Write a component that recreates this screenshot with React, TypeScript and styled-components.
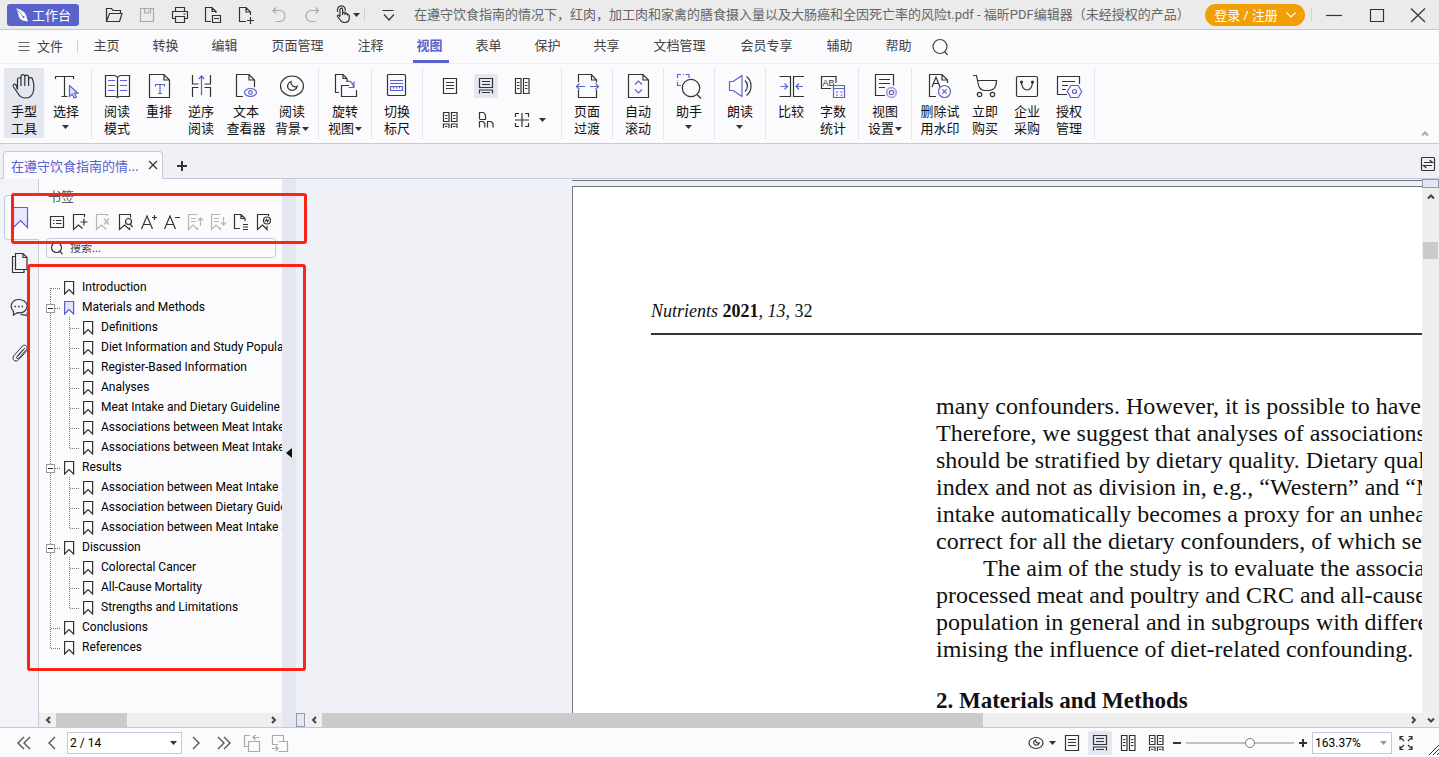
import React from "react";
import styled, { createGlobalStyle, css } from "styled-components";

const INK = "#333";
const ACCENT = "#5a63cb";
const LINE = "#c5c8d8";
const UI = `Roboto, "Noto Sans CJK SC", sans-serif`;
const LABEL = `"Noto Sans", "Noto Sans CJK SC", sans-serif`;

const GlobalStyle = createGlobalStyle`
  * { box-sizing: border-box; }
  body { margin: 0; font-family: ${LABEL}; font-size: 13px; color: #222; overflow: hidden; }
  button, input, select { font: inherit; color: inherit; }
  button { border: 0; padding: 0; background: none; white-space: nowrap; }
  svg { display: block; flex: none; }
`;

const Window = styled.div`
  display: flex;
  flex-direction: column;
  height: 100vh;
  background: #f0f1f6;
`;

/* ---------- icons ---------- */

const Ico = ({ size, children, color = INK }: { size: number; children: React.ReactNode; color?: string }) => (
  <svg width={size} height={size} viewBox={`0 0 ${size} ${size}`} fill="none" stroke={color} strokeWidth="1.2" aria-hidden="true">
    {children}
  </svg>
);

const Caret = ({ color = INK }: { color?: string }) => (
  <svg width="7" height="4" viewBox="0 0 7 4" fill={color} aria-hidden="true">
    <path d="M0 0h7L3.5 4z" />
  </svg>
);

const Chevron = ({ dir, color = "#444" }: { dir: "left" | "right" | "up" | "down"; color?: string }) => {
  const d = {
    left: "M7 2 4 5l3 3",
    right: "M3 2l3 3-3 3",
    up: "M2 6.5l3-3 3 3",
    down: "M2 3.5l3 3 3-3",
  }[dir];
  return (
    <svg width="10" height="10" viewBox="0 0 10 10" fill="none" stroke={color} strokeWidth="2" aria-hidden="true">
      <path d={d} />
    </svg>
  );
};

const P = ACCENT;

const bigIcons: Record<string, React.ReactNode> = {
  hand: (
    <path d="M7.5 17.5V7.5a1.7 1.7 0 0 1 3.5 0V14M11 8V4.5a1.9 1.9 0 0 1 3.8 0V14M14.8 5a1.9 1.9 0 0 1 3.8 0v9M18.6 7.5a1.9 1.9 0 0 1 3.900 0l1 3c.4 2 .5 4 .2 7-.5 5-3.200 8.500-7.700 8.500-4.500 0-6.500-1.500-8-4.500l-4.700-7c-.8-2.200 1.500-3.200 2.700-1.700l1.500 4.700" />
  ),
  select: (
    <>
      <path d="M3.500 7V4.500h18V7M12.500 4.500v20M9.500 24.500h6" />
      <path stroke={P} fill="#e6e6fb" d="M17.500 13.500v11l2.800-2.500 1.900 4 2.200-1-1.900-3.800h3.500z" />
    </>
  ),
  book: (
    <>
      <path d="M14.500 5.500c-1-1.300-2-2-3.500-2H2.500v21h9c1.500 0 2.300 0 3 .8.700-.8 1.500-.8 3-.8h9v-21H18c-1.500 0-2.500.7-3.500 2zv19.500" />
      <path stroke={P} d="M5 8.500h7M5 13.500h7M5 18.500h7M17 8.500h7M17 13.500h7M17 18.500h7" />
    </>
  ),
  reflow: (
    <>
      <path d="M4.500 2.500H19l5.500 5.500v17.500h-20zM19 2.500V8h5.500" />
      <path stroke={P} d="M10.500 14.500v-2h9v2M15 12.500v9M13 21.500h4" />
    </>
  ),
  reverse: (
    <>
      <path d="M5.500 3v9H11.500M5.500 25v-9.500H11.500M23.500 3v9H17.500M23.500 25v-9.500H17.500" />
      <path stroke={P} d="M14.500 4v19M11.800 7l2.700-3 2.700 3" />
    </>
  ),
  viewer: (
    <>
      <path d="M11 24.500H4.500v-22H17l5.500 5.500v7M17 2.500V8h5.500" />
      <ellipse cx="18.500" cy="20.500" rx="6" ry="4" stroke={P} />
      <circle cx="18.500" cy="20.500" r="1.800" stroke={P} />
    </>
  ),
  background: (
    <>
      <ellipse cx="14" cy="14" rx="11.500" ry="10" />
      <path d="M13 9.500c-4 1.500-4.500 6-1.500 8 3 2 7 .5 7.800-3.300-3 1.800-6.800-.7-6.300-4.700z" />
    </>
  ),
  rotate: (
    <>
      <path d="M8 20.500H4.500v-18H12l4 4V10M12 2.500V6.500h4M25.500 18v6.500h-15v-11H18" />
      <path stroke={P} d="M15.500 9.500c4-1.200 6.500 1.500 7 5.500M23 9.500v6H17.500" />
    </>
  ),
  ruler: (
    <>
      <rect x="4.500" y="2.500" width="18" height="21" rx="1" />
      <path stroke={P} d="M7 8.500h13M7 11.500h13M7.500 14.500h12v4h-12zM10.500 14.500v2M13.500 14.500v2M16.500 14.500v2" />
    </>
  ),
  transition: (
    <>
      <path d="M5.500 10V2.500h13L23.500 8v2.500M18.500 2.500V8h5M5.500 18v7.500h18V18" />
      <path stroke={P} d="M12 14.500H3.500M6.500 11.500l-3 3 3 3M17 14.500h8.500M22.500 11.500l3 3-3 3" />
    </>
  ),
  autoscroll: (
    <>
      <path d="M4.500 2.500H19l5.500 5.500v17.500h-20zM19 2.500V8h5.500" />
      <path stroke={P} d="M11 12.500l3.500-3.500 3.500 3.500M11 17.500l3.500 3.500 3.500-3.500" />
    </>
  ),
  assistant: (
    <>
      <path stroke={P} d="M2.500 6V2.500H6M10.500 2.500H14V6M2.500 10v3.500H6M8 2.500h1M2.500 8v.5" />
      <circle cx="16" cy="16" r="8.700" />
      <path d="M22 22.500l4 4" />
    </>
  ),
  speak: (
    <>
      <path stroke={P} d="M3.500 9.500h3.500L16 3.500v21L7 18.500H3.500z" strokeLinejoin="round" />
      <path d="M19 8.500c3.300 3 3.300 8 0 11M20.500 4.500c6 4.500 6 14.500 0 19" />
    </>
  ),
  compare: (
    <>
      <path d="M2.500 4.500h11v20h-11M27 4.500H16.500v20H27" />
      <path stroke={P} d="M3.500 14.500h7M7.500 11.500l3 3-3 3M26 14.500h-7M22 11.500l-3 3 3 3" />
    </>
  ),
  count: (
    <>
      <path d="M12 16.500H2.500v-12h14.500V11" />
      <text x="3.500" y="14" fontSize="9" fill={INK} stroke="none" fontFamily="Liberation Sans, sans-serif">AB</text>
      <path stroke={P} d="M14.500 13.500h11v12h-11zM14.500 16.500h11" />
      <path stroke="#b99be0" strokeWidth="2" d="M17 20h2M21.500 20h2M17 23.300h2M21.500 23.300h2" />
    </>
  ),
  settings: (
    <>
      <path d="M14 23.500H4.500v-21h18v11M8 7.500h11M8 11.500h11M8 15.500h6" />
      <circle cx="20.500" cy="20.500" r="4.800" stroke="#b99be0" strokeWidth="1.800" />
      <circle cx="20.500" cy="20.500" r="2.200" stroke={P} />
    </>
  ),
  watermark: (
    <>
      <path d="M10 24.500H3.500v-22H16l5.500 5.500v3M16 2.500V8h5.500M6 15l4-10 4 10M7.500 11.500h5" />
      <circle cx="18.500" cy="19.500" r="6" stroke={P} />
      <path stroke={P} d="M16.300 17.300l4.400 4.400M20.700 17.300l-4.400 4.400" />
    </>
  ),
  cart: (
    <>
      <path d="M2 3.500h3.500L6.500 8.500H25.500c0 6-2 10-8 10h-4C8.500 18.500 7.500 14 6.500 8.500" />
      <circle cx="8.500" cy="22.500" r="2.200" />
      <circle cx="21.500" cy="22.500" r="2.200" />
    </>
  ),
  bag: (
    <>
      <rect x="3.500" y="4.500" width="21" height="20" rx="1.500" />
      <path d="M8.500 10c0 5 2.500 8 5.500 8s5.500-3 5.500-8" />
      <circle cx="8.500" cy="10" r="1" fill={INK} />
      <circle cx="19.500" cy="10" r="1" fill={INK} />
    </>
  ),
  license: (
    <>
      <path d="M12 22.500H2.500v-18h22V12M7 9.500h13M7 13.500h6M7 17.500h4" />
      <path stroke={P} fill="#fbfbfe" d="M15.800 13.500h7.400l3.500 6-3.500 6h-7.400l-3.500-6z" />
      <circle cx="19.500" cy="19.500" r="2" stroke={P} />
    </>
  ),
};

const pageIcons: Record<string, React.ReactNode> = {
  single: <path d="M3.500 2.500h13v15h-13zM6 6.500h8M6 9.500h8M6 12.500h8" />,
  continuous: <path d="M3.500 2.500h13v9h-13zM6 5.500h8M6 8.500h8M3.500 17.500v-3.500h13v3.500M6 16.500h8" />,
  facing: <path d="M3.500 2.500h5.500v15H3.500zM11.500 2.500h5.500v15h-5.500zM5 6.500h2.500M5 9.500h2.500M5 12.500h2.500M13 6.500h2.500M13 9.500h2.500M13 12.500h2.500" />,
  facingCont: (
    <path d="M3.500 2.500h5.500v9H3.500zM11.500 2.500h5.500v9h-5.500zM5 5.500h2.500M5 8.500h2.500M13 5.500h2.500M13 8.500h2.500M3.500 18v-4h5.500v4M11.500 18v-4h5.500v4M5 16.500h2.500M13 16.500h2.500" />
  ),
  cover: <path d="M3.500 9V2.500h4l2 2.500v4.500h-6M3.500 17.500v-6h3.500l1.800 2v4M11.500 17.500v-6h3.500l2 2v4" />,
  split: <path d="M10 3v14M3 10h14M3.500 7V3.500H7M13 3.500h3.500V7M3.500 13v3.500H7M13 16.500h3.500V13" />,
};

/* ---------- title bar ---------- */

const TitleBar = styled.header`
  display: flex;
  align-items: center;
  flex: none;
  height: 30px;
  padding-left: 7px;
  background: #ebebeb;
  border-bottom: 1px solid ${LINE};
`;

const Workbench = styled.button`
  display: flex;
  align-items: center;
  justify-content: center;
  gap: 3px;
  width: 72px;
  height: 22px;
  margin-right: 18px;
  border-radius: 3px;
  background: ${ACCENT};
  color: #fff;
`;

const TitleTool = styled.button<{ $w?: number }>`
  display: flex;
  align-items: center;
  justify-content: center;
  flex: none;
  width: ${(p) => p.$w ?? 33}px;
  height: 29px;
`;

const Divider = styled.span<{ $h: number }>`
  flex: none;
  width: 1px;
  height: ${(p) => p.$h}px;
  background: #cfcfd4;
`;

const DocTitle = styled.h1`
  flex: 1;
  min-width: 0;
  margin: 0 0 0 10px;
  overflow: hidden;
  font-family: ${UI};
  font-size: 13px;
  font-weight: 400;
  line-height: 20px;
  color: #666;
  white-space: nowrap;
`;

const Login = styled.button`
  display: flex;
  align-items: center;
  justify-content: center;
  gap: 8px;
  width: 100px;
  height: 22px;
  margin-right: 6px;
  border-radius: 11px;
  background: #f29f05;
  color: #fff;
`;

/* ---------- menu ---------- */

const MenuBar = styled.nav`
  display: flex;
  align-items: center;
  flex: none;
  height: 34px;
  background: #fbfbfe;
  border-bottom: 1px solid #ededf2;
`;

const FileMenu = styled.button`
  display: flex;
  align-items: center;
  justify-content: center;
  gap: 7px;
  width: 77px;
  padding: 0 0 2px 4px;
  color: #444;
`;

const MenuTab = styled.button<{ $wide: boolean; $active: boolean }>`
  width: ${(p) => (p.$wide ? 87 : 59)}px;
  height: 33px;
  padding: 0 2px 4px 0;
  color: #444;
  background: linear-gradient(${ACCENT}, ${ACCENT}) bottom center / 0 3px no-repeat;
  ${(p) =>
    p.$active &&
    css`
      color: ${ACCENT};
      font-weight: 700;
      background-size: 36px 3px;
    `}
`;

const SearchButton = styled.button`
  display: flex;
  justify-content: center;
  width: 22px;
`;

/* ---------- ribbon ---------- */

const Ribbon = styled.div`
  display: flex;
  align-items: flex-start;
  flex: none;
  height: 80px;
  padding-top: 4px;
  background: #fbfbfe;
  border-bottom: 1px solid ${LINE};
`;

const RibbonGroup = styled.div`
  display: flex;
  gap: 2px;
  flex: none;
  height: 71px;
  padding: 0 5px;
  border-right: 1px solid #e4e5ee;
  &:first-child {
    padding-left: 4px;
  }
`;

const RibbonButton = styled.button<{ $w?: number; $active?: boolean }>`
  display: flex;
  flex-direction: column;
  align-items: center;
  flex: none;
  width: ${(p) => p.$w ?? 40}px;
  height: 70px;
  padding-top: 4px;
  border-radius: 2px;
  line-height: 17px;
  color: #111;
  background: ${(p) => (p.$active ? "#e4e7f0" : "transparent")};
`;

const RibbonLabel = styled.span`
  display: flex;
  flex-direction: column;
  align-items: center;
  margin-top: 3px;
`;

const LabelLine = styled.span<{ $caretOnly?: boolean }>`
  display: flex;
  align-items: center;
  justify-content: center;
  gap: 1px;
  height: 17px;
  padding-bottom: ${(p) => (p.$caretOnly ? 4 : 0)}px;
`;

const LayoutGrid = styled.div`
  display: grid;
  grid-template-columns: 36px 36px 29px 7px;
  grid-template-rows: 24px 24px;
  row-gap: 10px;
  align-content: start;
  align-items: center;
  padding: 6px 10px 0 10px;
`;

const PageMode = styled.button<{ $active?: boolean }>`
  display: flex;
  align-items: center;
  justify-content: center;
  flex: none;
  width: 24px;
  height: 24px;
  border-radius: 2px;
  background: ${(p) => (p.$active ? "#e4e7f0" : "transparent")};
`;

const CollapseButton = styled.button`
  align-self: flex-end;
  margin: 0 9px 4px auto;
`;

/* ---------- document tabs ---------- */

const TabBar = styled.div`
  display: flex;
  align-items: flex-end;
  flex: none;
  height: 35px;
  padding-left: 3px;
  background: #f0f1f6;
  border-bottom: 1px solid ${LINE};
`;

const DocTab = styled.div`
  display: flex;
  align-items: center;
  justify-content: space-between;
  width: 160px;
  height: 28px;
  margin-bottom: -1px;
  padding: 0 4px 0 7px;
  border: 1px solid ${LINE};
  border-bottom-color: #fbfbfe;
  border-radius: 4px 4px 0 0;
  background: #fbfbfe;
  color: ${ACCENT};
  white-space: nowrap;
`;

const TabIcon = styled.button<{ $end?: boolean }>`
  margin: ${(p) => (p.$end ? "0 3px 6px auto" : "0 0 6px 13px")};
`;

/* ---------- workspace ---------- */

const Workspace = styled.main`
  position: relative;
  display: flex;
  flex: 1;
  min-height: 0;
`;

const SideRail = styled.nav`
  display: flex;
  flex-direction: column;
  align-items: flex-end;
  flex: none;
  width: 39px;
  padding-top: 16px;
  background: #f3f4f9;
  border-right: 1px solid ${LINE};
`;

const RailButton = styled.button<{ $active?: boolean }>`
  display: flex;
  align-items: center;
  width: 34px;
  height: 45px;
  padding-left: 6px;
  ${(p) =>
    p.$active &&
    css`
      margin-right: -1px;
      width: 35px;
      padding-left: 7px;
      border: 1px solid ${LINE};
      border-right: 0;
      border-radius: 4px 0 0 4px;
      background: #fbfbfe;
    `}
`;

const BookmarkPanel = styled.section`
  display: flex;
  flex-direction: column;
  flex: none;
  width: 243px;
  background: #fbfbfe;
`;

const PanelTitle = styled.h2`
  margin: 0;
  padding: 7px 0 0 9px;
  font-size: 13px;
  font-weight: 400;
  line-height: 20px;
  color: #555;
`;

const PanelTools = styled.div`
  display: flex;
  padding: 4px 0 0 6px;
`;

const PanelTool = styled.button`
  display: flex;
  justify-content: center;
  flex: none;
  width: 23px;
  height: 24px;
  align-items: center;
`;

const PanelSearch = styled.label`
  display: flex;
  align-items: center;
  gap: 6px;
  height: 20px;
  margin: 4px 6px 0 7px;
  padding: 0 3px;
  border: 1px solid ${LINE};
  border-radius: 3px;
`;

const PanelInput = styled.input`
  min-width: 0;
  flex: 1;
  padding: 0;
  border: 0;
  outline: 0;
  background: none;
  font-size: 11px;
  line-height: 16px;
  &::placeholder {
    color: #444;
  }
`;

const Tree = styled.ul`
  flex: 1;
  min-height: 0;
  margin: 0;
  padding: 19px 0 0 6px;
  overflow: hidden;
  list-style: none;
`;

const TreeRow = styled.li`
  display: flex;
  height: 20px;
`;

const TreeLink = styled.a`
  display: flex;
  align-items: center;
  gap: 7px;
  color: #000;
  font-family: ${UI};
  font-size: 12px;
  line-height: 20px;
  white-space: nowrap;
  text-decoration: none;
`;

const Splitter = styled.button`
  display: flex;
  align-items: center;
  justify-content: center;
  flex: none;
  width: 14px;
  background: #e4e7f0;
`;

const HScroll = styled.div`
  display: flex;
  align-items: center;
  flex: none;
  height: 14px;
  background: #efefef;
`;

const HTrack = styled.div`
  display: flex;
  flex: 1;
  align-self: stretch;
`;

const Thumb = styled.div<{ $size: string }>`
  width: ${(p) => p.$size};
  background: #cbcbcb;
`;

const ScrollArrow = styled.button<{ $vertical?: boolean }>`
  display: flex;
  align-items: center;
  justify-content: center;
  flex: none;
  width: 17px;
  height: ${(p) => (p.$vertical ? 17 : 14)}px;
`;

const SplitHandle = styled.span<{ $vertical?: boolean }>`
  flex: none;
  width: ${(p) => (p.$vertical ? 17 : 9)}px;
  height: ${(p) => (p.$vertical ? 9 : 14)}px;
  border: 1px solid #9297b3;
  background: #e4e7f0;
`;

const DocumentPane = styled.section`
  display: flex;
  flex-direction: column;
  flex: 1;
  min-width: 0;
`;

const Canvas = styled.div`
  display: flex;
  flex-direction: column;
  flex: 1;
  gap: 5px;
  min-height: 0;
  padding-left: 276px;
  overflow: hidden;
  background: #f0f1f6;
`;

const PreviousPage = styled.div`
  flex: none;
  height: 2px;
  border-bottom: 1px solid #74767e;
`;

const Sheet = styled.article`
  flex: 1;
  padding: 112px 0 0 78px;
  border: solid #74767e;
  border-width: 1px 0 0 1px;
  background: #fff;
  color: #111;
  font-family: "Liberation Serif", serif;
  font-size: 24px;
  line-height: 27px;
  white-space: nowrap;
`;

const RunningHead = styled.p`
  margin: 0;
  padding-bottom: 9px;
  border-bottom: 2px solid #333;
  font-size: 18px;
  line-height: 25px;
`;

const Prose = styled.div`
  margin: 58px 0 0 285px;
`;

const Paragraph = styled.p<{ $indent?: boolean }>`
  margin: 0;
  text-indent: ${(p) => (p.$indent ? 47 : 0)}px;
`;

const SectionTitle = styled.h3`
  margin: 24px 0 0;
  font-size: 23px;
  line-height: 27px;
`;

const VScroll = styled.div`
  display: flex;
  flex-direction: column;
  flex: none;
  width: 17px;
  background: #efefef;
`;

const VThumb = styled.div`
  height: 17px;
  margin: 37px 1px auto;
  background: #cbcbcb;
`;

const Highlight = styled.div<{ $x: number; $y: number; $w: number; $h: number }>`
  position: absolute;
  left: ${(p) => p.$x}px;
  top: ${(p) => p.$y}px;
  width: ${(p) => p.$w}px;
  height: ${(p) => p.$h}px;
  border: 3px solid #fc2419;
  border-radius: 3px;
  pointer-events: none;
`;

/* ---------- status bar ---------- */

const StatusBar = styled.footer`
  display: flex;
  align-items: center;
  flex: none;
  height: 30px;
  padding-left: 11px;
  border-top: 1px solid ${LINE};
  background: #fbfbfe;
`;

const StatusButton = styled.button<{ $narrow?: boolean }>`
  display: flex;
  align-items: center;
  justify-content: center;
  flex: none;
  width: ${(p) => (p.$narrow ? 16 : 28)}px;
  height: 24px;
`;

const Combo = styled.label<{ $w: number }>`
  display: grid;
  grid-template-columns: 1fr 15px;
  align-items: center;
  flex: none;
  width: ${(p) => p.$w}px;
  height: 22px;
  border: 1px solid ${LINE};
  background: #fff;
`;

const ComboSelect = styled.select`
  grid-area: 1 / 1 / 2 / 3;
  height: 20px;
  padding: 0 2px;
  border: 0;
  outline: 0;
  appearance: none;
  background: none;
  color: #000;
  font-family: ${UI};
  font-size: 12px;
`;

const ComboCaret = styled.span`
  grid-area: 1 / 2;
  justify-self: center;
  pointer-events: none;
`;

const RightTools = styled.div`
  display: flex;
  align-items: center;
  margin-left: auto;
`;

const ModeRow = styled.div`
  display: flex;
  gap: 4px;
`;

const ZoomStep = styled.button`
  display: flex;
  align-items: center;
  justify-content: center;
  width: 18px;
  height: 20px;
`;

const ZoomSlider = styled.input`
  width: 108px;
  height: 16px;
  margin: 0;
  appearance: none;
  background: none;
  &::-webkit-slider-runnable-track {
    height: 2px;
    background: #c2c2c2;
  }
  &::-webkit-slider-thumb {
    appearance: none;
    width: 10px;
    height: 10px;
    margin-top: -4px;
    border: 1px solid #777;
    border-radius: 50%;
    background: #fff;
  }
`;

const Grip = styled.svg`
  align-self: flex-end;
  width: 14px;
  height: 14px;
  margin: 8px 0 0 5px;
`;

/* ---------- content ---------- */

const titleTools: { name: string; faded?: boolean; art: React.ReactNode }[] = [
  { name: "打开", art: <path d="M2.500 16.500v-13h5l1.500 2h7.500v3M2.500 16.500l3-8H18l-2.500 8z" /> },
  { name: "保存", faded: true, art: <path d="M3.500 3.500h13v13h-13zM7.500 3.500v4.500h6V3.500M11.500 5v1.500" /> },
  { name: "打印", art: <path d="M5.500 6.500v-4h9v4M5.500 13.500h-3v-7h15v7h-3M5.500 11.500h9v6h-9zM13.500 9h2" /> },
  { name: "另存为", art: <path d="M8 16.500H2.500v-14H9l4 4V8M9 2.500v4h4M9.500 10.500h8v7h-8zM11 13.500h5" /> },
  { name: "新建", art: <path d="M10 16.500H3.500v-14H10l4.500 4.500v3M10 2.500V7h4.500M14.500 12v7M11 15.500h7" /> },
  { name: "撤销", faded: true, art: <path d="M4 5.500h7a5 5.500 0 0 1 0 11H6.500M7 2.500l-3 3 3 3" /> },
  { name: "重做", faded: true, art: <path d="M16.500 5.500H9a5 5.500 0 0 0 0 11h4.500M13.500 2.500l3 3-3 3" /> },
];

const tabs = ["主页", "转换", "编辑", "页面管理", "注释", "视图", "表单", "保护", "共享", "文档管理", "会员专享", "辅助", "帮助"];

type Tool = { icon: string; lines: string[]; w?: number; caret?: boolean; active?: boolean };

const groupsBefore: Tool[][] = [
  [
    { icon: "hand", lines: ["手型", "工具"], active: true },
    { icon: "select", lines: ["选择"], caret: true },
  ],
  [
    { icon: "book", lines: ["阅读", "模式"] },
    { icon: "reflow", lines: ["重排"] },
    { icon: "reverse", lines: ["逆序", "阅读"] },
    { icon: "viewer", lines: ["文本", "查看器"], w: 46 },
    { icon: "background", lines: ["阅读", "背景"], caret: true, w: 42 },
  ],
  [{ icon: "rotate", lines: ["旋转", "视图"], caret: true, w: 42 }],
  [{ icon: "ruler", lines: ["切换", "标尺"] }],
];

const groupsAfter: Tool[][] = [
  [{ icon: "transition", lines: ["页面", "过渡"] }],
  [{ icon: "autoscroll", lines: ["自动", "滚动"] }],
  [{ icon: "assistant", lines: ["助手"], caret: true }],
  [{ icon: "speak", lines: ["朗读"], caret: true }],
  [
    { icon: "compare", lines: ["比较"] },
    { icon: "count", lines: ["字数", "统计"] },
  ],
  [{ icon: "settings", lines: ["视图", "设置"], caret: true, w: 42 }],
  [
    { icon: "watermark", lines: ["删除试", "用水印"], w: 46 },
    { icon: "cart", lines: ["立即", "购买"] },
    { icon: "bag", lines: ["企业", "采购"] },
    { icon: "license", lines: ["授权", "管理"] },
  ],
];

const panelTools: { name: string; faded?: boolean; art: React.ReactNode }[] = [
  { name: "选项", art: <path d="M3.500 4.500h13v11h-13zM6 8.500h1.500M9 8.500h5.500M6 11.500h1.500M9 11.500h5.500" /> },
  { name: "添加书签", art: <path d="M14.500 5V2.500h-11v15l5-4.500 4 3.500M14 6.500v7M10.500 10h7" /> },
  { name: "删除书签", faded: true, art: <path d="M14.500 4V2.500h-11v15l5-4.500 5 4.500M11 6.500l5 6M16 6.500l-5 6" /> },
  { name: "查找书签", art: <><path d="M14.500 5.500v-3h-11v15l5-4.500 5 4.500v-2M14 12l2.500 3" /><circle cx="12.500" cy="9.500" r="3" /></> },
  { name: "放大文本", art: <path d="M2.500 17L8 4l5.500 13M4.500 12.500h7M13 5.500h5M15.500 3v5" /> },
  { name: "缩小文本", art: <path d="M2.500 17L8 4l5.500 13M4.500 12.500h7M13 5.500h5" /> },
  { name: "上移", faded: true, art: <path d="M12.500 2.500h-9v15l4.500-4.500 4.500 4.500v-2M6 6.500h5M6 9.500h5M15.500 14V6M13 8.500L15.500 6 18 8.500" /> },
  { name: "下移", faded: true, art: <path d="M12.500 2.500h-9v15l4.500-4.500 4.500 4.500v-2M6 6.500h5M6 9.500h5M15.500 5v8M13 10.500l2.500 2.500 2.500-2.500" /> },
  { name: "从目录生成", art: <path d="M9 16.500H3.500v-14H10l4 4V9M10 2.500v4h4M12 12.500h5M12 15h5M12 17.500h5" /> },
  { name: "书签属性", art: <><path d="M14.500 4V2.500h-11v15l5-4.500 4.500 4.500V14" /><circle cx="13" cy="8.500" r="3.500" /><path d="M11 9.500l1.500-2 1 2 1.500-2" /></> },
];

const outline: { text: string; level: 0 | 1; open?: boolean; last?: boolean; current?: boolean }[] = [
  { text: "Introduction", level: 0 },
  { text: "Materials and Methods", level: 0, open: true, current: true },
  { text: "Definitions", level: 1 },
  { text: "Diet Information and Study Population", level: 1 },
  { text: "Register-Based Information", level: 1 },
  { text: "Analyses", level: 1 },
  { text: "Meat Intake and Dietary Guideline", level: 1 },
  { text: "Associations between Meat Intake", level: 1 },
  { text: "Associations between Meat Intake", level: 1, last: true },
  { text: "Results", level: 0, open: true },
  { text: "Association between Meat Intake and", level: 1 },
  { text: "Association between Dietary Guidelines", level: 1 },
  { text: "Association between Meat Intake and", level: 1, last: true },
  { text: "Discussion", level: 0, open: true },
  { text: "Colorectal Cancer", level: 1 },
  { text: "All-Cause Mortality", level: 1 },
  { text: "Strengths and Limitations", level: 1, last: true },
  { text: "Conclusions", level: 0 },
  { text: "References", level: 0, last: true },
];

const Connector = ({ first, last, branch, open }: { first?: boolean; last?: boolean; branch?: boolean; open?: boolean }) => (
  <svg width="19" height="20" viewBox="0 0 19 20" fill="none" stroke="#777" aria-hidden="true">
    <path d={`M5.500 ${first ? 11 : 0}V${last ? 12 : 20}`} strokeDasharray="1 1" />
    {branch && <path d="M6 11.500h10" strokeDasharray="1 1" />}
    {open && (
      <>
        <rect x="1.500" y="7.500" width="8" height="8" fill="#fff" stroke="#999" />
        <path d="M3 11.500h5" stroke="#222" />
      </>
    )}
  </svg>
);

const RibbonTool = ({ tool }: { tool: Tool }) => {
  const two = tool.lines.length === 2;
  return (
    <RibbonButton $w={tool.w} $active={tool.active}>
      <Ico size={28}>{bigIcons[tool.icon]}</Ico>
      <RibbonLabel>
        <LabelLine>{tool.lines[0]}</LabelLine>
        {two && (
          <LabelLine>
            {tool.lines[1]}
            {tool.caret && <Caret />}
          </LabelLine>
        )}
        {!two && tool.caret && (
          <LabelLine $caretOnly>
            <Caret />
          </LabelLine>
        )}
      </RibbonLabel>
    </RibbonButton>
  );
};

const EyeIcon = () => (
  <Ico size={16}>
    <ellipse cx="8" cy="8" rx="7" ry="5.500" />
    <path d="M7.500 5c-2.500 1-2.500 4 0 5 2 .5 3.500-.5 3.800-2-2 .7-4-.8-3.800-3z" />
  </Ico>
);

export default function App() {
  return (
    <Window>
      <GlobalStyle />
      <TitleBar>
        <Workbench>
          <svg width="14" height="14" viewBox="0 0 14 14" fill="#fff" aria-hidden="true">
            <path d="M1 0.500c4 .5 8.500 3 10 6.500.7 2 .9 4 2 6.500-4-.5-7-1-8.500-3.500C3 7.500 3.500 4 1 .5z" />
            <path d="M2 1.500l6 7" stroke={ACCENT} strokeWidth=".8" />
            <circle cx="8.500" cy="9" r="1.100" fill={ACCENT} />
          </svg>
          工作台
        </Workbench>
        {titleTools.map((t) => (
          <TitleTool key={t.name} aria-label={t.name}>
            <Ico size={20} color={t.faded ? "#aaa" : INK}>{t.art}</Ico>
          </TitleTool>
        ))}
        <TitleTool $w={36} aria-label="手型工具">
          <Ico size={20}>
            <path d="M7 11V4.500a1.300 1.300 0 0 1 2.600 0V10M9.600 8.500a1.200 1.200 0 0 1 2.400 0V10M12 9a1.200 1.200 0 0 1 2.300 0v1.500M14.300 10c1-.8 2-.2 2 .8v2c0 3-1.500 4.700-4.500 4.700-2.500 0-3.800-1-4.600-2.500L4.500 11.500c-.5-1.200.8-2 1.600-1L7 12M5 7a4 4 0 1 1 7-.5" />
          </Ico>
          <Caret />
        </TitleTool>
        <Divider $h={13} />
        <TitleTool $w={39} aria-label="自定义">
          <Ico size={20}>
            <path d="M8.500 5.500h11M10 9.500l5 5.500 5-5.500" transform="translate(-1)" />
          </Ico>
        </TitleTool>
        <DocTitle>在遵守饮食指南的情况下，红肉，加工肉和家禽的膳食摄入量以及大肠癌和全因死亡率的风险t.pdf - 福昕PDF编辑器（未经授权的产品）</DocTitle>
        <Login>
          登录 / 注册
          <Ico size={10} color="#fff">
            <path d="M.5 2.500L5 7l4.500-4.500" />
          </Ico>
        </Login>
        <Divider $h={13} />
        <TitleTool $w={44} aria-label="最小化">
          <Ico size={16}><path d="M0 8.500h16" /></Ico>
        </TitleTool>
        <TitleTool $w={41} aria-label="最大化">
          <Ico size={16}><path d="M1.500 2.500h13v12h-13z" /></Ico>
        </TitleTool>
        <TitleTool $w={42} aria-label="关闭">
          <Ico size={16}><path d="M1 1.500l14 13.500M15 1.500L1 15" /></Ico>
        </TitleTool>
      </TitleBar>

      <MenuBar>
        <FileMenu>
          <Ico size={12} color="#666"><path d="M.5 2.500h11M.5 6.500h11M.5 10.500h11" strokeWidth="1" /></Ico>
          文件
        </FileMenu>
        <Divider $h={13} />
        {tabs.map((t) => (
          <MenuTab key={t} $wide={t.length > 2} $active={t === "视图"}>{t}</MenuTab>
        ))}
        <SearchButton aria-label="搜索">
          <Ico size={18} color="#444">
            <circle cx="9" cy="8.500" r="7" />
            <path d="M13.500 13.500l3 3.500" />
          </Ico>
        </SearchButton>
      </MenuBar>

      <Ribbon>
        {groupsBefore.map((g, i) => (
          <RibbonGroup key={i}>{g.map((t) => <RibbonTool key={t.icon} tool={t} />)}</RibbonGroup>
        ))}
        <RibbonGroup>
          <LayoutGrid>
            <PageMode aria-label="单页"><Ico size={20}>{pageIcons.single}</Ico></PageMode>
            <PageMode aria-label="连续" $active><Ico size={20}>{pageIcons.continuous}</Ico></PageMode>
            <PageMode aria-label="对开"><Ico size={20}>{pageIcons.facing}</Ico></PageMode>
            <span />
            <PageMode aria-label="连续对开"><Ico size={20}>{pageIcons.facingCont}</Ico></PageMode>
            <PageMode aria-label="单独封面"><Ico size={20}>{pageIcons.cover}</Ico></PageMode>
            <PageMode aria-label="拆分"><Ico size={20}>{pageIcons.split}</Ico></PageMode>
            <Caret />
          </LayoutGrid>
        </RibbonGroup>
        {groupsAfter.map((g, i) => (
          <RibbonGroup key={i}>{g.map((t) => <RibbonTool key={t.icon} tool={t} />)}</RibbonGroup>
        ))}
        <CollapseButton aria-label="折叠功能区"><Chevron dir="up" color="#aaa" /></CollapseButton>
      </Ribbon>

      <TabBar>
        <DocTab>
          在遵守饮食指南的情...
          <button aria-label="关闭标签">
            <Ico size={10}><path d="M1 1l8 8M9 1L1 9" /></Ico>
          </button>
        </DocTab>
        <TabIcon aria-label="新建标签">
          <Ico size={12}><path d="M6 1v10M1 6h10" strokeWidth="2" /></Ico>
        </TabIcon>
        <TabIcon $end aria-label="切换标签">
          <Ico size={16}>
            <rect x="1.500" y="1.500" width="13" height="13" rx="1" />
            <path d="M4 6.500h8.500L9.500 4M12 9.500H3.500L6.500 12" />
          </Ico>
        </TabIcon>
      </TabBar>

      <Workspace>
        <SideRail>
          <RailButton $active aria-label="书签">
            <svg width="18" height="24" viewBox="0 0 18 24" fill="#e9e8fd" stroke={ACCENT} strokeWidth="1.200" aria-hidden="true">
              <path d="M1.500 1.500h14v20l-7-7-7 7z" />
            </svg>
          </RailButton>
          <RailButton aria-label="页面">
            <Ico size={22}><path d="M5.500 1.500H13l4 4v12H5.500zM13 1.500v4h4M5.500 4.500h-3v16H14v-3" /></Ico>
          </RailButton>
          <RailButton aria-label="注释">
            <Ico size={22}>
              <path d="M3.500 14.500C-1.500 9 2.500 2.500 8.500 2.500s10 4 8 9c-1.500 3.500-5 4.700-9 4.200L3.500 18zM10.500 17.500c1.500.5 3 .5 4 .3l3 1.200-.5-2.500c1.500-1.500 1.500-4 0-5.500" />
              <path d="M4.500 9.500h1.500M8 9.500h1.500M11.500 9.500H13" strokeWidth="1.500" />
            </Ico>
          </RailButton>
          <RailButton aria-label="附件">
            <Ico size={22}><path strokeWidth="1" d="M13.500 7L7 14.500c-1.200 1.700.4 3 1.800 1.700L16.500 7.500c2.200-3-1.800-6-4.200-3.300L4 13.500c-3 4 1.500 7.500 4.700 4.200L17.500 8M15 6l-7.500 8.500" /></Ico>
          </RailButton>
        </SideRail>

        <BookmarkPanel>
          <PanelTitle>书签</PanelTitle>
          <PanelTools>
            {panelTools.map((t) => (
              <PanelTool key={t.name} aria-label={t.name}>
                <Ico size={20} color={t.faded ? "#b5b5b8" : INK}>{t.art}</Ico>
              </PanelTool>
            ))}
          </PanelTools>
          <PanelSearch>
            <Ico size={14}>
              <circle cx="6.500" cy="6.500" r="5" />
              <path d="M10 10.500l2.500 2.500" />
            </Ico>
            <PanelInput placeholder="搜索..." aria-label="搜索书签" />
          </PanelSearch>
          <Tree>
            {outline.map((o, i) => (
              <TreeRow key={i}>
                <Connector first={i === 0} last={i === outline.length - 1} branch={o.level === 0} open={o.open} />
                {o.level === 1 && <Connector branch last={o.last} />}
                <TreeLink href="#">
                  <svg width="11" height="16" viewBox="0 0 11 16" fill={o.current ? "#e3e2fc" : "none"} stroke={o.current ? ACCENT : INK} strokeWidth="1.200" aria-hidden="true">
                    <path d="M.6 2.500h9v12.500L5.100 10.500.6 15z" />
                  </svg>
                  {o.text}
                </TreeLink>
              </TreeRow>
            ))}
          </Tree>
          <HScroll>
            <ScrollArrow aria-label="向左"><Chevron dir="left" /></ScrollArrow>
            <HTrack><Thumb $size="34%" /></HTrack>
            <ScrollArrow aria-label="向右"><Chevron dir="right" /></ScrollArrow>
          </HScroll>
        </BookmarkPanel>

        <Splitter aria-label="折叠面板">
          <svg width="6" height="10" viewBox="0 0 6 10" aria-hidden="true"><path d="M6 0v10L0 5z" fill="#111" /></svg>
        </Splitter>

        <DocumentPane>
          <Canvas>
            <PreviousPage />
            <Sheet>
              <RunningHead><em>Nutrients</em> <b>2021</b>, <em>13</em>, 32</RunningHead>
              <Prose>
                <Paragraph>
                  many confounders. However, it is possible to have a<br />
                  Therefore, we suggest that analyses of associations<br />
                  should be stratified by dietary quality. Dietary quality<br />
                  index and not as division in, e.g., “Western” and “Mediterranean”<br />
                  intake automatically becomes a proxy for an unhealthy<br />
                  correct for all the dietary confounders, of which several
                </Paragraph>
                <Paragraph $indent>
                  The aim of the study is to evaluate the associations
                </Paragraph>
                <Paragraph>
                  processed meat and poultry and CRC and all-cause<br />
                  population in general and in subgroups with different<br />
                  imising the influence of diet-related confounding.
                </Paragraph>
                <SectionTitle>2. Materials and Methods</SectionTitle>
              </Prose>
            </Sheet>
          </Canvas>
          <HScroll>
            <SplitHandle />
            <ScrollArrow aria-label="向左"><Chevron dir="left" /></ScrollArrow>
            <HTrack><Thumb $size="61%" /></HTrack>
            <ScrollArrow aria-label="向右"><Chevron dir="right" /></ScrollArrow>
          </HScroll>
        </DocumentPane>

        <VScroll>
          <SplitHandle $vertical />
          <ScrollArrow $vertical aria-label="向上"><Chevron dir="up" /></ScrollArrow>
          <VThumb />
          <ScrollArrow aria-label="向下"><Chevron dir="down" /></ScrollArrow>
        </VScroll>

        <Highlight $x={11} $y={14} $w={296} $h={51} />
        <Highlight $x={27} $y={85} $w={279} $h={407} />
      </Workspace>

      <StatusBar>
        <StatusButton aria-label="第一页"><Ico size={16} color="#555"><path d="M7 2L1 8l6 6M13 2L7 8l6 6" strokeWidth="1.400" /></Ico></StatusButton>
        <StatusButton aria-label="上一页"><Ico size={16} color="#555"><path d="M10 2L4 8l6 6" strokeWidth="1.400" /></Ico></StatusButton>
        <Combo $w={115}>
          <ComboSelect aria-label="页码"><option>2 / 14</option></ComboSelect>
          <ComboCaret><Caret /></ComboCaret>
        </Combo>
        <StatusButton aria-label="下一页"><Ico size={16} color="#555"><path d="M5 2l6 6-6 6" strokeWidth="1.400" /></Ico></StatusButton>
        <StatusButton aria-label="最后一页"><Ico size={16} color="#555"><path d="M2 2l6 6-6 6M8 2l6 6-6 6" strokeWidth="1.400" /></Ico></StatusButton>
        <StatusButton aria-label="上一视图"><Ico size={18} color="#aaa"><path d="M5.500 7.500h11v10h-11zM5.500 12.500h-4v-11H7M16 3.500h-6M12.500 1L10 3.500 12.500 6" /></Ico></StatusButton>
        <StatusButton aria-label="下一视图"><Ico size={18} color="#aaa"><path d="M12.500 7V1.500h-11v9H7M7.500 7.500h9v10h-9M1 14.500h6M4.500 12L7 14.500 4.500 17" /></Ico></StatusButton>
        <RightTools>
          <EyeIcon />
          <StatusButton $narrow aria-label="阅读背景"><Caret /></StatusButton>
          <ModeRow>
            <PageMode aria-label="单页"><Ico size={20}>{pageIcons.single}</Ico></PageMode>
            <PageMode aria-label="连续" $active><Ico size={20}>{pageIcons.continuous}</Ico></PageMode>
            <PageMode aria-label="对开"><Ico size={20}>{pageIcons.facing}</Ico></PageMode>
            <PageMode aria-label="连续对开"><Ico size={20}>{pageIcons.facingCont}</Ico></PageMode>
          </ModeRow>
          <ZoomStep aria-label="缩小"><Ico size={10}><path d="M1 5h8" strokeWidth="2" /></Ico></ZoomStep>
          <ZoomSlider type="range" min="0" max="100" defaultValue="60" aria-label="缩放" />
          <ZoomStep aria-label="放大"><Ico size={10}><path d="M1 5h8M5 1v8" strokeWidth="2" /></Ico></ZoomStep>
          <Combo $w={80}>
            <ComboSelect aria-label="缩放比例"><option>163.37%</option></ComboSelect>
            <ComboCaret><Caret color="#999" /></ComboCaret>
          </Combo>
          <StatusButton aria-label="全屏">
            <Ico size={16}><path d="M6 6L2 2M2 5V1.500h3.500M10 6l4-4M10.500 1.500H14V5M6 10l-4 4M2 11v3.500h3.500M10 10l4 4M10.500 14.500H14V11" /></Ico>
          </StatusButton>
          <Grip viewBox="0 0 14 14" fill="none" stroke={INK} aria-hidden="true">
            <path d="M4 14L14 4M8 14l6-6M12 14l2-2" />
          </Grip>
        </RightTools>
      </StatusBar>
    </Window>
  );
}
